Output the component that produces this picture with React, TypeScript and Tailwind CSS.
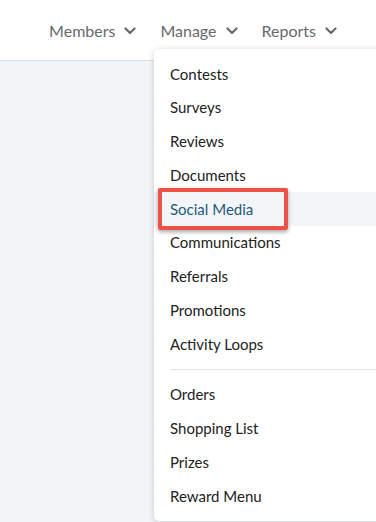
const manageItems = [
  "Contests",
  "Surveys",
  "Reviews",
  "Documents",
  "Social Media",
  "Communications",
  "Referrals",
  "Promotions",
  "Activity Loops",
];

const shopItems = ["Orders", "Shopping List", "Prizes", "Reward Menu"];

function Chevron() {
  return (
    <svg viewBox="0 0 12 8" className="h-[8px] w-[12px]" fill="none">
      <path d="M1.5 1.5 6 6l4.5-4.5" stroke="currentColor" strokeWidth="2.2" strokeLinecap="round" strokeLinejoin="round" />
    </svg>
  );
}

function NavItem({ label }: { label: string }) {
  return (
    <button className="flex items-center gap-[9px] text-[16px] text-[#666a6e]">
      <span>{label}</span>
      <Chevron />
    </button>
  );
}

function MenuItem({ label, active }: { label: string; active?: boolean }) {
  if (active) {
    return (
      <div className="relative flex h-[33.75px] items-center bg-[#f3f6f8] pl-4 text-[#1e5a78]">
        <span>{label}</span>
        <div className="pointer-events-none absolute -top-[4px] left-[4px] h-[42px] w-[130px] rounded-[2px] border-[4px] border-[#ee5247] shadow-[0_2px_4px_rgba(0,0,0,0.35)]" />
      </div>
    );
  }
  return (
    <div className="flex h-[33.75px] items-center pl-4 text-[#222]">
      <span>{label}</span>
    </div>
  );
}

export default function App() {
  return (
    <div className="relative h-[522px] w-[376px] overflow-hidden bg-[#f1f5f8] font-['Lato',sans-serif]">
      <header className="flex h-[61px] items-center justify-end gap-[24px] border-b border-[#dcdfe2] bg-white pt-[2px] pr-[39px]">
        <NavItem label="Members" />
        <NavItem label="Manage" />
        <NavItem label="Reports" />
      </header>

      <div className="absolute top-[49px] left-[154px] w-[240px] rounded-l-[5px] bg-white py-2 text-[15px] shadow-[0_1px_6px_rgba(0,0,0,0.18)]">
        {manageItems.map((item) => (
          <MenuItem key={item} label={item} active={item === "Social Media"} />
        ))}
        <div className="my-2 ml-4 h-px bg-[#e2e5e8]" />
        {shopItems.map((item) => (
          <MenuItem key={item} label={item} />
        ))}
      </div>
    </div>
  );
}
